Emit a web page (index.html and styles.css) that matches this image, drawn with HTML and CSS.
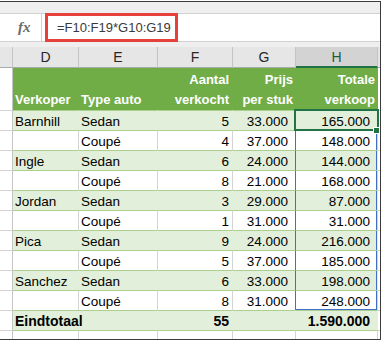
FILE: index.html
```html
<!DOCTYPE html>
<html lang="nl">
<head>
  <meta charset="UTF-8">
  <title>Verkoop per verkoper</title>
  <link rel="stylesheet" href="styles.css">
</head>
<body>
  <div class="frame">
    <div class="ribbon"></div>

    <div class="fbar">
      <div class="fx">fx</div>
      <div class="formula">=F10:F19*G10:G19</div>
      <div class="fill"></div>
    </div>

    <div class="gap"></div>

    <div class="cols">
      <div class="ch"></div>
      <div class="ch">D</div>
      <div class="ch">E</div>
      <div class="ch">F</div>
      <div class="ch">G</div>
      <div class="ch active">H</div>
      <div class="ch end"></div>
    </div>

    <div class="sheet">
      <div class="row head">
        <div class="rh"></div>
        <div class="c low">Verkoper</div>
        <div class="c low">Type auto</div>
        <div class="c num f">Aantal<br>verkocht</div>
        <div class="c num g">Prijs<br>per stuk</div>
        <div class="c num h">Totale<br>verkoop</div>
        <div class="x"></div>
      </div>

      <div class="row alt">
        <div class="rh"></div>
        <div class="c">Barnhill</div>
        <div class="c">Sedan</div>
        <div class="c num f">5</div>
        <div class="c num g">33.000</div>
        <div class="c num h sel">165.000</div>
        <div class="x"></div>
      </div>
      <div class="row">
        <div class="rh"></div>
        <div class="c"></div>
        <div class="c">Coupé</div>
        <div class="c num f">4</div>
        <div class="c num g rl">37.000</div>
        <div class="c num h rng">148.000</div>
        <div class="x"></div>
      </div>
      <div class="row alt">
        <div class="rh"></div>
        <div class="c">Ingle</div>
        <div class="c">Sedan</div>
        <div class="c num f">6</div>
        <div class="c num g rl">24.000</div>
        <div class="c num h rng">144.000</div>
        <div class="x"></div>
      </div>
      <div class="row">
        <div class="rh"></div>
        <div class="c"></div>
        <div class="c">Coupé</div>
        <div class="c num f">8</div>
        <div class="c num g rl">21.000</div>
        <div class="c num h rng">168.000</div>
        <div class="x"></div>
      </div>
      <div class="row alt">
        <div class="rh"></div>
        <div class="c">Jordan</div>
        <div class="c">Sedan</div>
        <div class="c num f">3</div>
        <div class="c num g rl">29.000</div>
        <div class="c num h rng">87.000</div>
        <div class="x"></div>
      </div>
      <div class="row">
        <div class="rh"></div>
        <div class="c"></div>
        <div class="c">Coupé</div>
        <div class="c num f">1</div>
        <div class="c num g rl">31.000</div>
        <div class="c num h rng">31.000</div>
        <div class="x"></div>
      </div>
      <div class="row alt">
        <div class="rh"></div>
        <div class="c">Pica</div>
        <div class="c">Sedan</div>
        <div class="c num f">9</div>
        <div class="c num g rl">24.000</div>
        <div class="c num h rng">216.000</div>
        <div class="x"></div>
      </div>
      <div class="row">
        <div class="rh"></div>
        <div class="c"></div>
        <div class="c">Coupé</div>
        <div class="c num f">5</div>
        <div class="c num g rl">37.000</div>
        <div class="c num h rng">185.000</div>
        <div class="x"></div>
      </div>
      <div class="row alt">
        <div class="rh"></div>
        <div class="c">Sanchez</div>
        <div class="c">Sedan</div>
        <div class="c num f">6</div>
        <div class="c num g rl">33.000</div>
        <div class="c num h rng">198.000</div>
        <div class="x"></div>
      </div>
      <div class="row">
        <div class="rh"></div>
        <div class="c"></div>
        <div class="c">Coupé</div>
        <div class="c num f">8</div>
        <div class="c num g rl">31.000</div>
        <div class="c num h rng last">248.000</div>
        <div class="x"></div>
      </div>

      <div class="row alt total">
        <div class="rh"></div>
        <div class="c span2">Eindtotaal</div>
        <div class="c num f">55</div>
        <div class="c num g"></div>
        <div class="c num h">1.590.000</div>
        <div class="x"></div>
      </div>

      <div class="row blank">
        <div class="rh"></div>
        <div class="c"></div>
        <div class="c"></div>
        <div class="c"></div>
        <div class="c"></div>
        <div class="c"></div>
        <div class="x"></div>
      </div>
    </div>
  </div>
</body>
</html>
```

FILE: styles.css
```css
body {
  margin: 0;
  background: #fff;
  font-family: 'Liberation Sans', Arial, sans-serif;
  color: #000;
}

.frame {
  margin-top: 1px;
  width: 380px;
  height: 337px;
  overflow: hidden;
  border-top: 1px solid #3c3c3c;
  border-right: 1px solid #3c3c3c;
  border-bottom: 1px solid #3c3c3c;
  background: #efefef;
}

.ribbon {
  height: 11px;
}

/* formula bar */
.fbar {
  display: flex;
  height: 29px;
  box-sizing: border-box;
  border-top: 1px solid #d2d2d2;
  border-bottom: 1px solid #d2d2d2;
  background: #fff;
}

.fx {
  width: 42px;
  box-sizing: border-box;
  border-right: 1px solid #d2d2d2;
  padding-left: 18px;
  font-family: 'Liberation Serif', serif;
  font-style: italic;
  font-weight: bold;
  font-size: 15px;
  line-height: 26px;
  color: #6a6a6a;
}

.formula {
  margin: -1px 0 -1px 3px;
  width: 133px;
  box-sizing: border-box;
  border: 3px solid #e5403a;
  padding-left: 9px;
  font-size: 13px;
  line-height: 23px;
  color: #3a3a3a;
}

.fill {
  flex: 1;
}

.gap {
  height: 5px;
}

/* column letters */
.cols,
.row {
  display: grid;
  grid-template-columns: 13px 66px 79px 75px 63px 82px 2px;
}

.ch {
  height: 21px;
  box-sizing: border-box;
  border-right: 1px solid #c4c4c4;
  border-bottom: 1px solid #ababab;
  background: #e6e6e6;
  text-align: center;
  font-size: 14px;
  line-height: 20px;
  color: #262626;
}

.ch.active {
  background: #d3d3d3;
  border-bottom: 2px solid #217346;
  color: #1d5e3c;
}

.ch.end {
  border-right: none;
}

/* sheet */
.sheet {
  background: #fff;
}

.c {
  height: 20px;
  box-sizing: border-box;
  border-top: 1px solid #a9d08e;
  border-right: 1px solid #d4d4d4;
  padding: 2px 2px 0 2px;
  font-size: 13.5px;
  line-height: 17px;
  white-space: nowrap;
}

.c.span2 {
  grid-column: span 2;
}

.rh {
  border-top: 1px solid #d4d4d4;
  border-right: 1px solid #c4c4c4;
  background: #fff;
}

.x {
  border-top: 1px solid #d4d4d4;
}

.num {
  text-align: right;
}

.num.f {
  padding-right: 3px;
}

.num.g,
.num.h {
  padding-right: 7px;
}

.row.alt .c {
  background: #e2efda;
  border-right-color: transparent;
}

.row.head .rh,
.row.head .x {
  border-top: none;
}

.row.head .c {
  height: 42px;
  border-top: none;
  border-right-color: transparent;
  background: #70ad47;
  color: #fff;
  font-weight: bold;
  font-size: 13px;
  line-height: 20px;
}

.row.head .c.low {
  padding-top: 22px;
}

.row.head .num.g,
.row.head .num.h {
  padding-right: 2px;
}

.row.total .c {
  font-weight: bold;
  font-size: 14px;
}

.row.blank .c {
  height: 9px;
}

/* active cell and selected range */
.sel {
  position: relative;
}

.sel::after {
  content: '';
  position: absolute;
  left: -2px;
  top: -2px;
  width: 85px;
  height: 22px;
  box-sizing: border-box;
  border: 2px solid #217346;
}

.sel::before {
  content: '';
  position: absolute;
  left: 77px;
  top: 16px;
  width: 7px;
  height: 7px;
  box-sizing: border-box;
  border: 1px solid #fff;
  background: #217346;
  z-index: 1;
}

.row .c.rl {
  border-right-color: #3f6fc6;
}

.rng {
  box-shadow: inset -1px 0 #3f6fc6;
}

.rng.last {
  box-shadow: inset -1px -1px #3f6fc6;
}
```
